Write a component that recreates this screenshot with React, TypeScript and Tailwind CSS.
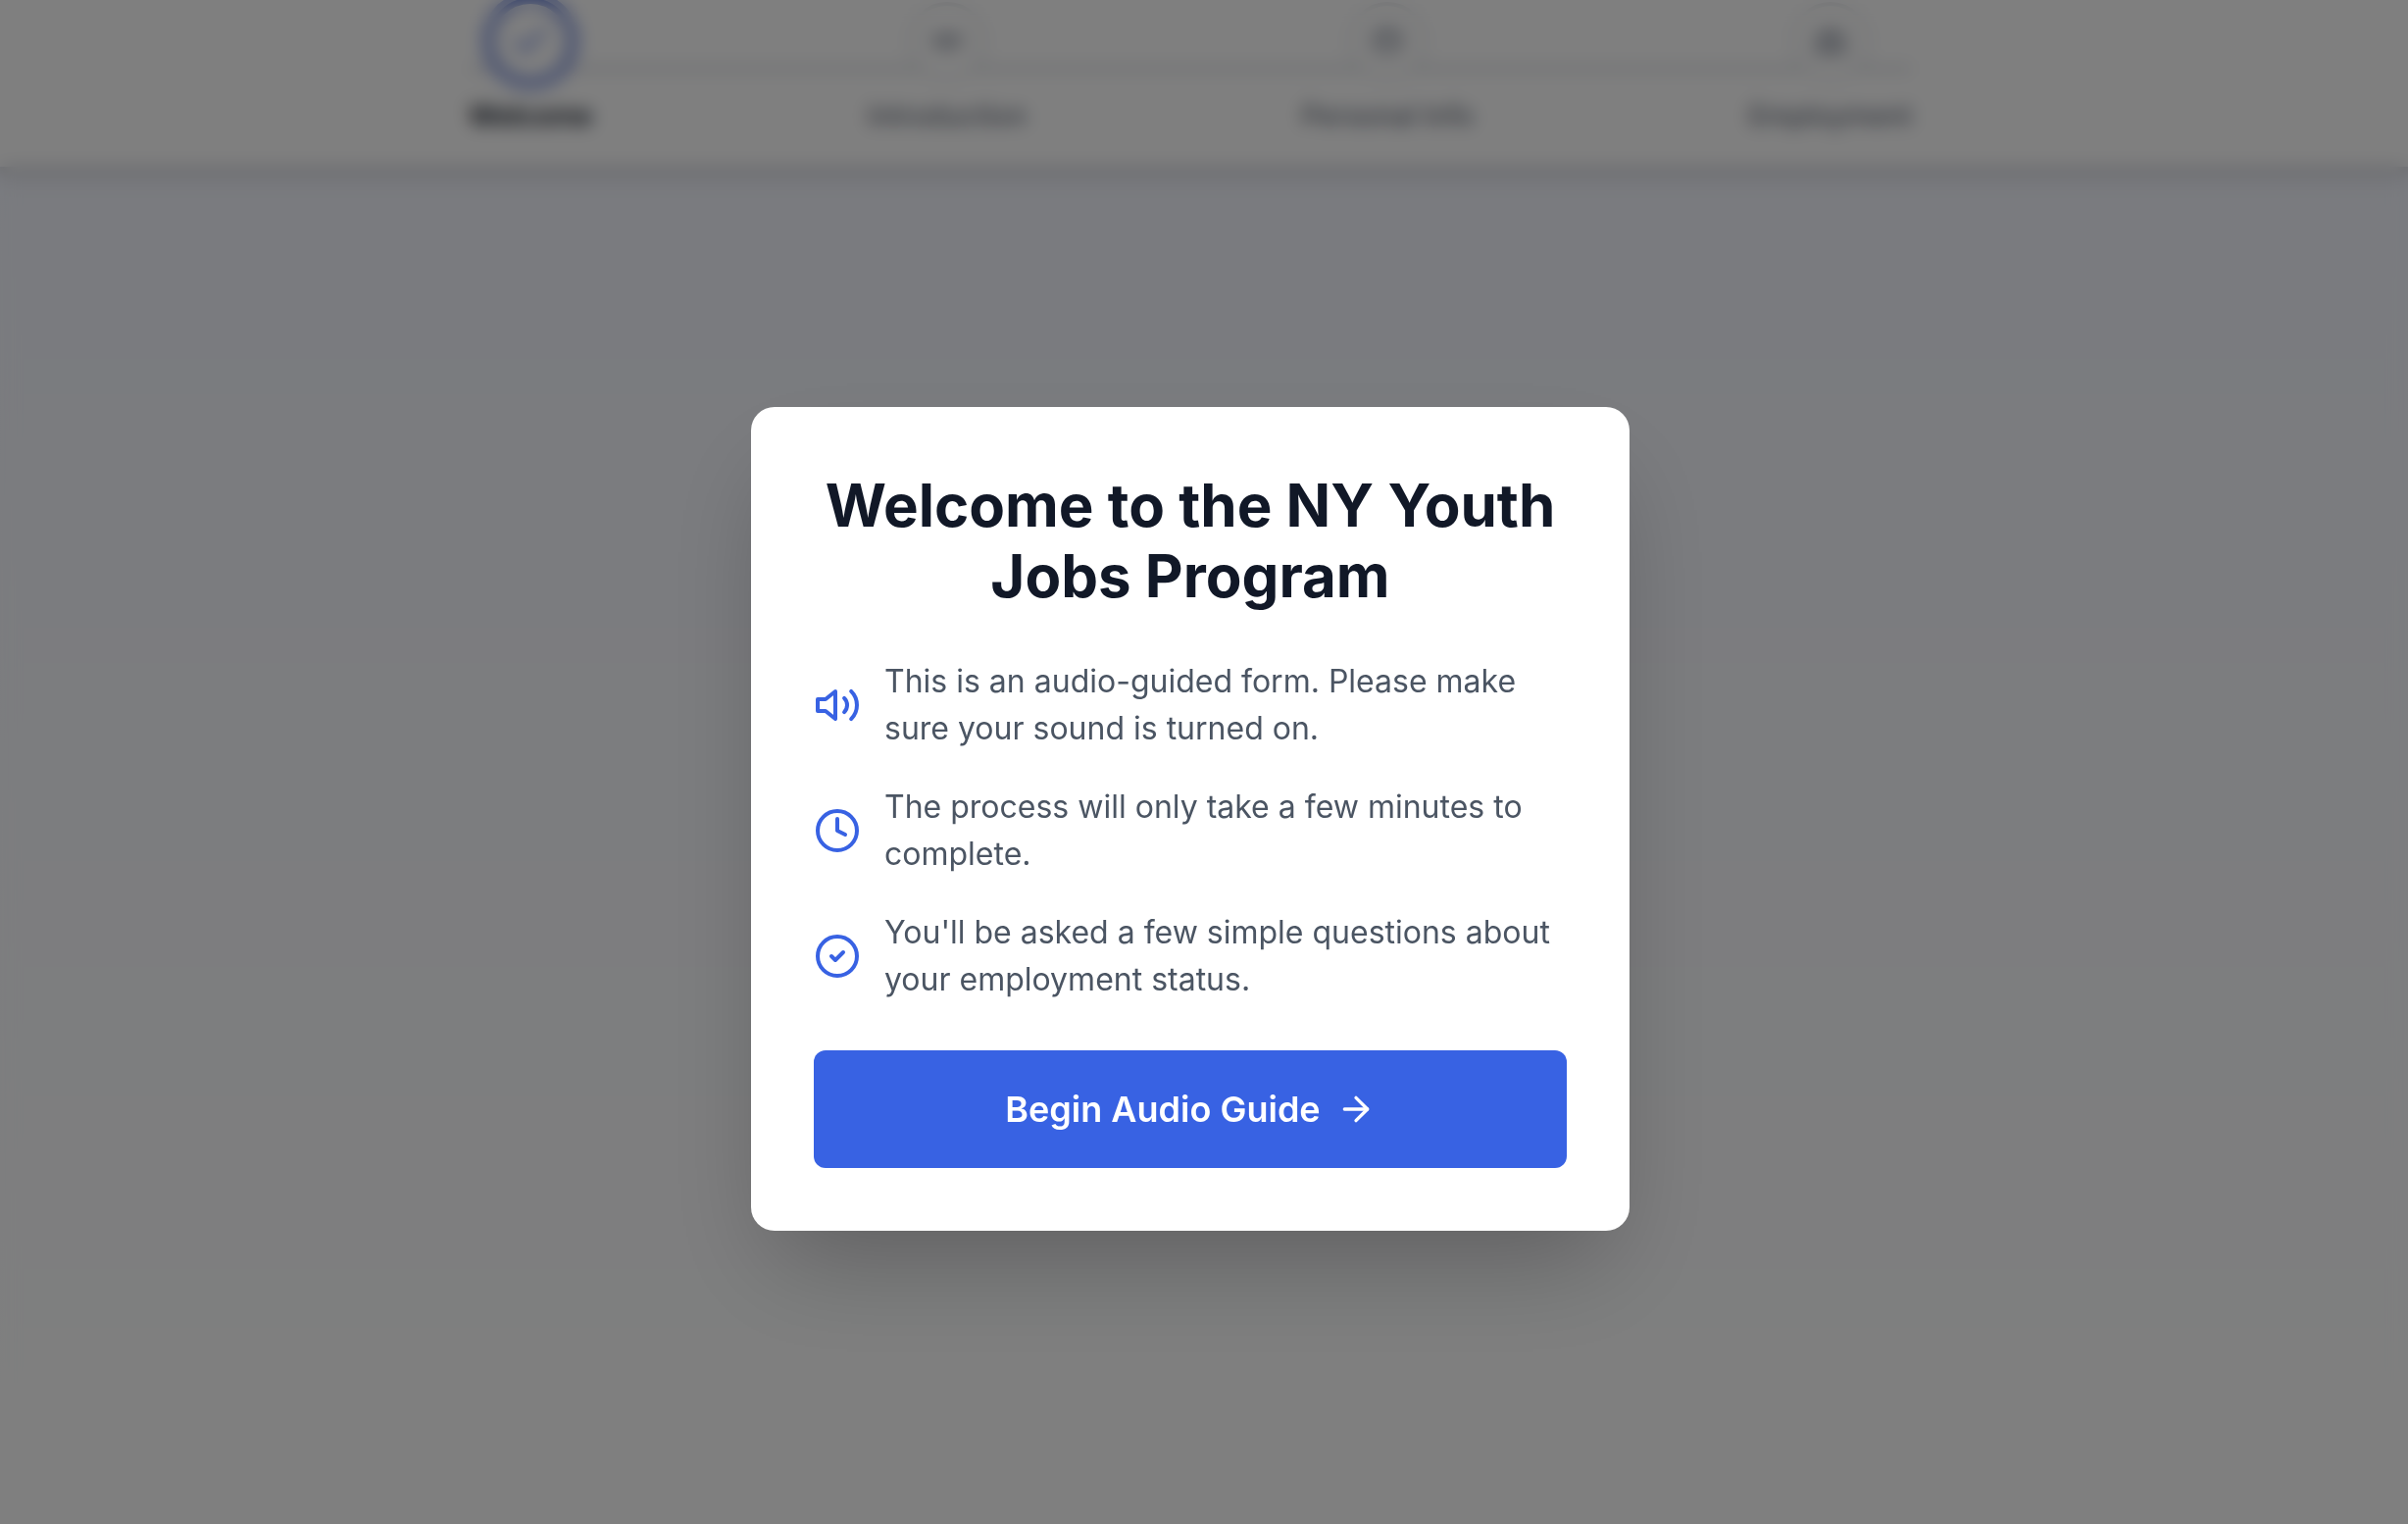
import { ReactNode } from "react";
import { ArrowRight, Check, CircleCheck } from "lucide-react";
import { FaBriefcase, FaHandshake, FaUserCircle } from "react-icons/fa";
import { FiClock, FiVolume2 } from "react-icons/fi";

type Step = { label: string; icon: ReactNode; active?: boolean };

const steps: Step[] = [
  { label: "Welcome", icon: <Check className="size-11" />, active: true },
  { label: "Introduction", icon: <FaHandshake className="size-8" /> },
  { label: "Personal Info", icon: <FaUserCircle className="size-8" /> },
  { label: "Employment", icon: <FaBriefcase className="size-8" /> },
];

const notes: { icon: ReactNode; text: string }[] = [
  {
    icon: <FiVolume2 className="size-12 shrink-0" />,
    text: "This is an audio-guided form. Please make sure your sound is turned on.",
  },
  {
    icon: <FiClock className="size-12 shrink-0" />,
    text: "The process will only take a few minutes to complete.",
  },
  {
    icon: <CircleCheck className="size-12 shrink-0" />,
    text: "You'll be asked a few simple questions about your employment status.",
  },
];

function StepMarker({ label, icon, active }: Step) {
  return (
    <li className="relative flex flex-col items-center gap-3.5">
      <span className="flex h-21 items-center">
        <span
          className={
            active
              ? "-my-1 flex size-22 items-center justify-center rounded-full border-6 border-[#6c84d6] bg-white text-[#4a6ad8] ring-6 ring-[#b4c1ee]"
              : "flex size-20 items-center justify-center rounded-full border-4 border-gray-200 bg-white text-[#adb2bc]"
          }
        >
          {icon}
        </span>
      </span>
      <span
        className={
          active
            ? "text-[28px] leading-10 font-semibold text-[#111827]"
            : "text-[28px] leading-10 font-medium text-[#6b7280]"
        }
      >
        {label}
      </span>
    </li>
  );
}

export default function App() {
  return (
    <div className="min-h-screen overflow-hidden bg-linear-to-b from-[#f2f5fe] to-white font-['Inter',sans-serif]">
      <header className="bg-white pb-8 shadow-[0_8px_16px_0_rgba(0,0,0,0.12),0_4px_8px_0_rgba(0,0,0,0.1)]">
        <div className="mr-7 px-8">
          <div className="relative mx-auto max-w-[1472px]">
            <div className="absolute inset-x-0 top-[66px] h-2 bg-gray-200" />
            <ol className="flex justify-between">
              {steps.map((step) => (
                <StepMarker key={step.label} {...step} />
              ))}
            </ol>
          </div>
        </div>
      </header>

      <div className="fixed inset-0 flex items-center justify-center bg-black/50 pt-[116px] pr-7 backdrop-blur-[9px]">
        <section
          role="dialog"
          aria-modal="true"
          aria-labelledby="welcome-title"
          className="w-full max-w-4xl rounded-3xl bg-white p-16 shadow-[0_50px_100px_-24px_rgba(0,0,0,0.25)]"
        >
          <h1
            id="welcome-title"
            className="text-center text-[60px] leading-[72px] font-bold text-[#111827]"
          >
            Welcome to the NY Youth Jobs Program
          </h1>
          <ul className="my-12 flex flex-col gap-8">
            {notes.map((note) => (
              <li key={note.text} className="flex items-center gap-6 text-[#3862e3]">
                {note.icon}
                <p className="text-[32px] leading-12 text-[#4b5563]">{note.text}</p>
              </li>
            ))}
          </ul>
          <button
            type="button"
            className="flex h-30 w-full items-center justify-center gap-4 rounded-xl bg-[#3862e3] text-4xl font-semibold text-white"
          >
            Begin Audio Guide
            <ArrowRight className="size-10" />
          </button>
        </section>
      </div>
    </div>
  );
}
